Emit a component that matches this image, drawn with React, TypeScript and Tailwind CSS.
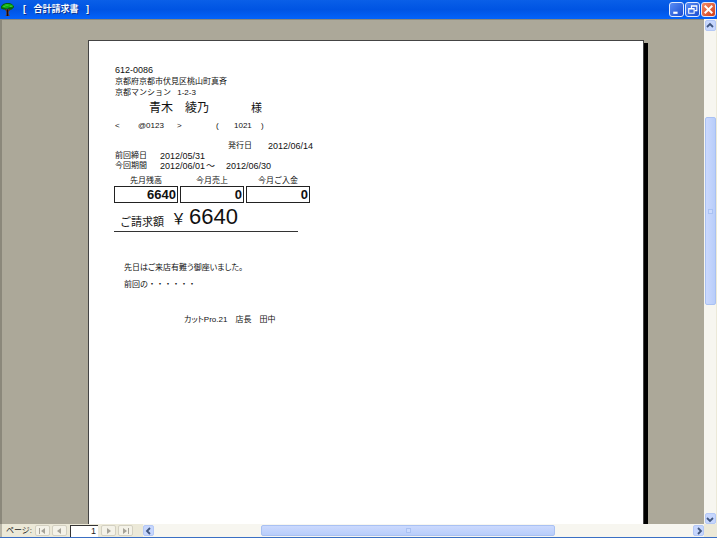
import type { ReactNode } from 'react';

type Direction = 'up' | 'down' | 'left' | 'right';

const chevrons: Record<Direction, string> = {
  up: 'M1 5 L4 2 L7 5',
  down: 'M1 3 L4 6 L7 3',
  left: 'M5 1 L2 4 L5 7',
  right: 'M3 1 L6 4 L3 7',
};

const balances = [
  { label: '先月残高', value: '6640' },
  { label: '今月売上', value: '0' },
  { label: '今月ご入金', value: '0' },
];

function TreeIcon() {
  return (
    <svg viewBox="0 0 12 12" className="h-[13px] w-[13px] shrink-0" aria-hidden="true">
      <path d="M3 5 L5 8 V11 L4 12 H8 L7 10 V8 L10 5 L6 6 Z" fill="#6b3418" />
      <path d="M6 6 V12" stroke="#1c0b05" strokeWidth="1" />
      <path d="M0 3 L2 1 L5 0 H8 L10 1 L12 3 V4 L10 6 H8 L6 5 L4 6 H2 L0 5 Z" fill="#07600c" />
      <path d="M1 3 L4 1 H8 L11 2 V4 L8 4 L5 5 L1 4 Z" fill="#0fae18" />
      <path d="M4 2 H7 M8 3 H10 M2 3 H4" stroke="#46dc3c" strokeWidth="0.8" />
    </svg>
  );
}

function WindowButton({ label, close, children }: { label: string; close?: boolean; children: ReactNode }) {
  return (
    <button
      type="button"
      aria-label={label}
      className={`flex h-[15px] w-[15px] items-center justify-center rounded-[3px] border border-[#dfe9ff] ${
        close ? 'bg-linear-to-br from-[#f08a68] to-[#d03a10]' : 'bg-linear-to-br from-[#5b8df5] to-[#1a4bd0]'
      }`}
    >
      <svg viewBox="0 0 12 12" className="h-[13px] w-[13px] shrink-0" fill="none" stroke="#fff">
        {children}
      </svg>
    </button>
  );
}

function ScrollButton({ direction, label }: { direction: Direction; label: string }) {
  return (
    <button
      type="button"
      aria-label={label}
      className="flex h-[11px] w-[11px] shrink-0 items-center justify-center rounded-xs border border-[#b4c8f6] bg-[#c6d6fd]"
    >
      <svg viewBox="0 0 8 8" className="h-[8px] w-[8px] shrink-0" fill="none" stroke="#40567f" strokeWidth="1.8">
        <path d={chevrons[direction]} />
      </svg>
    </button>
  );
}

function NavButton({ label, children }: { label: string; children: ReactNode }) {
  return (
    <button
      type="button"
      aria-label={label}
      className="flex h-[11px] w-[15px] items-center justify-center rounded-xs border border-[#d3d0c1] bg-[#f4f2e8]"
    >
      <svg viewBox="0 0 9 8" className="h-[8px] w-[9px]" fill="#a5a298">
        {children}
      </svg>
    </button>
  );
}

function Grip() {
  return <span className="h-[5px] w-[5px] border border-[#a9c1f3] bg-[#cbdafd]" />;
}

function TitleBar() {
  return (
    <header className="flex h-[19px] shrink-0 items-center bg-linear-to-b from-[#0a5fe8] via-[#0054e3] to-[#0463fb] pr-px pl-px">
      <TreeIcon />
      <h1 className="ml-[9px] flex-1 text-[9px] font-bold whitespace-pre text-white [text-shadow:1px_1px_0_#0a2f8c]">
        [ <span className="mx-[5px]">合計請求書</span> ]
      </h1>
      <div className="flex gap-px">
        <WindowButton label="最小化">
          <path d="M3 9 H7" strokeWidth="2" />
        </WindowButton>
        <WindowButton label="元に戻す">
          <path d="M5 4.5 V2.5 H10 V7 H8 M5 3 H10" />
          <path d="M2.5 5 H7.5 V9.5 H2.5 Z M2.5 5.5 H7.5" />
        </WindowButton>
        <WindowButton label="閉じる" close>
          <path d="M2.5 2.5 L9.5 9.5 M9.5 2.5 L2.5 9.5" strokeWidth="1.8" />
        </WindowButton>
      </div>
    </header>
  );
}

function Invoice() {
  return (
    <article className="mt-5 mr-[60px] ml-[86px] flex-1 border-t border-r border-l border-[#444] bg-white pt-6 pl-[26px] text-[9px] whitespace-nowrap text-[#111] shadow-[4px_3px_0_#000]">
      <address className="text-[8px] leading-[11px] not-italic">
        <p className="text-[9px]">612-0086</p>
        <p>京都府京都市伏見区桃山町真斉</p>
        <p>
          京都マンション <span className="ml-1">1-2-3</span>
        </p>
      </address>
      <div className="flex h-5 items-center pl-[34px] text-[12px]">
        <h2 className="w-[102px]">青木　綾乃</h2>
        <span className="text-[11px]">様</span>
      </div>
      <div className="flex h-[15px] items-center text-[8px]">
        <span className="w-[23px]">&lt;</span>
        <span className="w-[39px]">@0123</span>
        <span className="w-[39px]">&gt;</span>
        <span className="w-[18px]">(</span>
        <span className="w-[27px]">1021</span>
        <span>)</span>
      </div>

      <dl className="mt-2 leading-[10px]">
        <div className="flex pl-[113px]">
          <dt className="w-10 text-[8px]">発行日</dt>
          <dd>2012/06/14</dd>
        </div>
        <div className="flex">
          <dt className="w-[45px] text-[8px]">前回締日</dt>
          <dd>2012/05/31</dd>
        </div>
        <div className="flex">
          <dt className="w-[45px] text-[8px]">今回期間</dt>
          <dd className="flex">
            <span className="w-[46px]">2012/06/01</span>
            <span className="w-5">～</span>
            <span>2012/06/30</span>
          </dd>
        </div>
      </dl>

      <table className="mt-[5px] -ml-[3px] table-fixed border-separate border-spacing-x-[2px] border-spacing-y-0">
        <thead>
          <tr>
            {balances.map((item) => (
              <th key={item.label} scope="col" className="w-16 p-0 text-center text-[8px] leading-[10px] font-normal">
                {item.label}
              </th>
            ))}
          </tr>
        </thead>
        <tbody>
          <tr>
            {balances.map((item) => (
              <td key={item.label} className="h-4 border border-[#222] p-0 pt-px pr-px text-right text-[13px] leading-[14px] font-bold">
                {item.value}
              </td>
            ))}
          </tr>
        </tbody>
      </table>

      <div className="-ml-px flex h-[29px] w-[184px] items-center border-b border-[#333] pl-1.5">
        <span className="mt-2.5 w-[51px] text-[11px]">ご請求額</span>
        <span className="mt-1 w-[18px] text-[15px]">￥</span>
        <span className="text-[22px] leading-6">6640</span>
      </div>

      <div className="mt-[31px] pl-[9px] text-[8px] leading-[10px]">
        <p className="[font-feature-settings:'palt']">先日はご来店有難う御座いました。</p>
        <p className="mt-[7px]">前回の・・・・・・</p>
        <p className="mt-[25px] pl-[60px] [font-feature-settings:'palt']">カットPro.21　店長　田中</p>
      </div>
    </article>
  );
}

export default function App() {
  return (
    <div className="flex h-screen flex-col overflow-hidden border-b border-b-[#3a6fc4] bg-[#ece9d8] font-['Liberation_Sans','Noto_Sans_CJK_JP',sans-serif]">
      <TitleBar />
      <div className="flex min-h-0 flex-1">
        <main className="flex min-w-0 flex-1 overflow-hidden border-t border-l-2 border-[#8b887b] bg-[#aca899]">
          <Invoice />
        </main>
        <div className="flex w-[13px] shrink-0 flex-col items-center border-r border-[#ece9d8] bg-[#f7f6f0] pt-px">
          <ScrollButton direction="up" label="上へスクロール" />
          <div className="flex min-h-0 w-full flex-1 flex-col items-center">
            <div className="h-[86px] shrink-0" />
            <div className="flex h-[188px] w-[11px] items-center justify-center rounded-xs border border-[#a9c1f3] bg-linear-to-r from-[#cbd9fe] to-[#b8cdfa]">
              <Grip />
            </div>
          </div>
          <ScrollButton direction="down" label="下へスクロール" />
        </div>
      </div>
      <footer className="flex h-[13px] shrink-0 items-center border-l-2 border-[#b9b6a8] pl-1 text-[8px] text-[#222]">
        <label htmlFor="page" className="w-[29px] whitespace-nowrap">
          ページ:
        </label>
        <div className="flex gap-0.5">
          <NavButton label="最初のページ">
            <path d="M1 1 H2 V7 H1 Z M7 1 V7 L3 4 Z" />
          </NavButton>
          <NavButton label="前のページ">
            <path d="M6 1 V7 L2 4 Z" />
          </NavButton>
        </div>
        <input
          id="page"
          type="text"
          defaultValue="1"
          className="mx-[3px] h-[12px] w-[28px] border-t border-l border-[#333] bg-white pr-0.5 text-right text-[9px] leading-[10px] outline-none"
        />
        <div className="flex gap-0.5">
          <NavButton label="次のページ">
            <path d="M3 1 V7 L7 4 Z" />
          </NavButton>
          <NavButton label="最後のページ">
            <path d="M2 1 V7 L6 4 Z M7 1 H8 V7 H7 Z" />
          </NavButton>
        </div>
        <div className="ml-2.5 flex h-full min-w-0 flex-1 items-center bg-[#f7f6f0]">
          <ScrollButton direction="left" label="左へスクロール" />
          <div className="flex min-w-0 flex-1 pl-[107px]">
            <div className="flex h-[11px] w-[294px] items-center justify-center rounded-xs border border-[#a9c1f3] bg-linear-to-b from-[#cbd9fe] to-[#b8cdfa]">
              <Grip />
            </div>
          </div>
          <ScrollButton direction="right" label="右へスクロール" />
        </div>
        <div className="w-[13px] shrink-0" />
      </footer>
    </div>
  );
}
